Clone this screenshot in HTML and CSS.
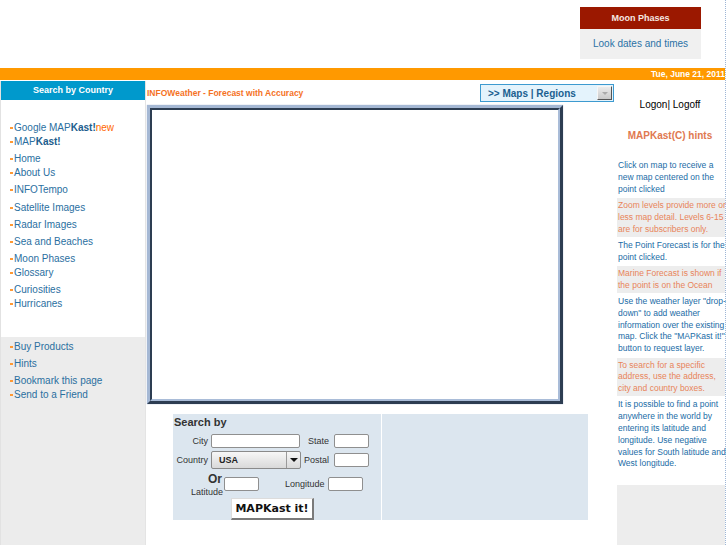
FILE: index.html
```html
<!DOCTYPE html>
<html>
<head>
<meta charset="utf-8">
<title>INFOWeather - MAPKast</title>
<link rel="stylesheet" href="styles.css">
</head>
<body>
<div class="page">
  <header class="top">
    <div class="moon">
      <div class="moon-head">Moon Phases</div>
      <div class="moon-body"><a href="#">Look dates and times</a></div>
    </div>
  </header>
  <div class="datebar">Tue, June 21, 2011</div>
  <div class="main">
    <aside class="left">
      <div class="lhead">Search by Country</div>
      <ul class="nav">
        <li><a href="#">Google MAP<b>Kast!</b></a><span class="new">new</span></li>
        <li><a href="#">MAP<b>Kast!</b></a></li>
        <li class="g3"><a href="#">Home</a></li>
        <li><a href="#">About Us</a></li>
        <li class="g3"><a href="#">INFOTempo</a></li>
        <li class="g4"><a href="#">Satellite Images</a></li>
        <li class="g3"><a href="#">Radar Images</a></li>
        <li class="g3"><a href="#">Sea and Beaches</a></li>
        <li class="g3"><a href="#">Moon Phases</a></li>
        <li><a href="#">Glossary</a></li>
        <li class="g3"><a href="#">Curiosities</a></li>
        <li><a href="#">Hurricanes</a></li>
      </ul>
      <ul class="nav nav2">
        <li><a href="#">Buy Products</a></li>
        <li class="g3"><a href="#">Hints</a></li>
        <li class="g3"><a href="#">Bookmark this page</a></li>
        <li><a href="#">Send to a Friend</a></li>
      </ul>
    </aside>
    <section class="center">
      <div class="titlerow">
        <span class="title">INFOWeather - Forecast with Accuracy</span>
        <div class="maps"><span class="maps-text">&gt;&gt; Maps | Regions</span><span class="mapbtn"><span class="tri-gray"></span></span></div>
      </div>
      <div class="mapframe"><div class="mapinner"></div></div>
      <div class="searchbox">
        <form class="sform">
          <div class="sb-title">Search by</div>
          <div class="frow r1">
            <span class="lbl">City</span>
            <input class="inp w89" type="text">
            <span class="lbl2 state">State</span>
            <input class="inp w35" type="text">
          </div>
          <div class="frow r2">
            <span class="lbl">Country</span>
            <div class="sel"><span class="selv">USA</span><span class="arr"><span class="tri"></span></span></div>
            <span class="lbl2 postal">Postal</span>
            <input class="inp w35" type="text">
          </div>
          <div class="frow r3">
            <div class="orlat"><div class="or">Or</div><div class="lat">Latitude</div></div>
            <input class="inp w35 mt4" type="text">
            <span class="lon">Longitude</span>
            <input class="inp w35 mt4" type="text">
          </div>
          <div class="frow r4">
            <button class="go" type="button">MAPKast it!</button>
          </div>
        </form>
        <div class="sright"></div>
      </div>
    </section>
    <aside class="right">
      <div class="logon">Logon| Logoff</div>
      <div class="hhead">MAPKast(C) hints</div>
      <div class="hints">
        <p class="hint blue">Click on map to receive a<br>new map centered on the<br>point clicked</p>
        <p class="hint org">Zoom levels provide more or<br>less map detail. Levels 6-15<br>are for subscribers only.</p>
        <p class="hint blue">The Point Forecast is for the<br>point clicked.</p>
        <p class="hint org">Marine Forecast is shown if<br>the point is on the Ocean</p>
        <p class="hint blue">Use the weather layer "drop-<br>down" to add weather<br>information over the existing<br>map. Click the "MAPKast it!"<br>button to request layer.</p>
        <p class="hint org">To search for a specific<br>address, use the address,<br>city and country boxes.</p>
        <p class="hint blue">It is possible to find a point<br>anywhere in the world by<br>entering its latitude and<br>longitude. Use negative<br>values for South latitude and<br>West longitude.</p>
      </div>
      <div class="hint-end"></div>
    </aside>
  </div>
</div>
</body>
</html>
```
FILE: styles.css
```css
* { box-sizing: border-box; }
html, body { margin: 0; padding: 0; }
body {
  background: #fff;
  font-family: "Liberation Sans", Arial, sans-serif;
  overflow: hidden;
}
a { text-decoration: none; color: inherit; }

.page {
  width: 726px;
  height: 545px;
  border-right: 1px dotted #9db6d6;
  display: flex;
  flex-direction: column;
}

/* header */
.top {
  height: 68px;
  display: flex;
  justify-content: flex-end;
  padding: 7px 24px 0 0;
}
.moon { width: 121px; }
.moon-head {
  height: 22px;
  background: #9b1800;
  color: #f5e8e2;
  font-weight: bold;
  font-size: 9px;
  line-height: 22px;
  text-align: center;
}
.moon-body {
  height: 30px;
  background: #f0f0f0;
  color: #2b72a6;
  font-size: 10px;
  line-height: 30px;
  text-align: center;
}

.datebar {
  height: 12px;
  background: #ff9900;
  color: #fff;
  font-weight: bold;
  font-size: 8.5px;
  line-height: 12px;
  text-align: right;
}

.main {
  flex: 1;
  display: flex;
  margin-top: 1px;
  min-height: 0;
}

/* left column */
.left {
  width: 146px;
  display: flex;
  flex-direction: column;
  border-left: 1px solid #e2e2e2;
  border-right: 1px solid #e4e4e4;
}
.lhead {
  height: 19px;
  background: #0099cc;
  color: #fff;
  font-weight: bold;
  font-size: 9px;
  line-height: 19px;
  text-align: center;
}
.nav {
  list-style: none;
  margin: 0;
  padding: 21px 0 0 9px;
  height: 237px;
  font-size: 10px;
  line-height: 14px;
  color: #2a6f9f;
}
.nav li { white-space: nowrap; }
.nav li::before {
  content: "";
  display: inline-block;
  width: 3px;
  height: 2px;
  background: #ff9933;
  margin-right: 1px;
  vertical-align: middle;
}
.nav li.g3 { margin-top: 3px; }
.nav li.g4 { margin-top: 4px; }
.nav b { color: #1c5d8d; }
.nav .new { color: #ff6600; }
.nav2 {
  flex: 1;
  height: auto;
  background: #ececec;
  padding-top: 3px;
}

/* center column */
.center {
  width: 469px;
  display: flex;
  flex-direction: column;
}
.titlerow {
  height: 24px;
  display: flex;
  justify-content: space-between;
  align-items: flex-start;
  padding: 3px 1px 0 1px;
}
.title {
  color: #f5721f;
  font-weight: bold;
  font-size: 8.5px;
  line-height: 18px;
}
.maps {
  width: 134px;
  height: 18px;
  border: 1px solid #3d9ad0;
  background: #e4f3fc;
  display: flex;
  align-items: center;
  padding-left: 7px;
}
.maps-text {
  flex: 1;
  color: #1b5f90;
  font-weight: bold;
  font-size: 10px;
}
.mapbtn {
  width: 15px;
  height: 14px;
  margin-right: 1px;
  background: linear-gradient(#ececec, #c9c9c9);
  border: 1px solid;
  border-color: #f6f6f6 #555 #555 #f6f6f6;
  display: flex;
  align-items: center;
  justify-content: center;
}
.tri-gray {
  width: 0;
  height: 0;
  border-left: 3px solid transparent;
  border-right: 3px solid transparent;
  border-top: 3px solid #aaa;
}

.mapframe {
  margin-left: 1px;
  width: 416px;
  height: 299px;
  border: 3px solid;
  border-color: #a5b8d4 #2d3d52 #2d3d52 #a5b8d4;
  box-shadow: 0 0 1px #9fb2cc;
}
.mapinner {
  height: 100%;
  border: 2px solid;
  border-color: #2d3d52 #a9bcd8 #a9bcd8 #2d3d52;
  background: #fff;
}

.searchbox {
  margin: 10px 0 0 27px;
  width: 415px;
  height: 106px;
  display: flex;
  background: #dce6ef;
}
.sform {
  width: 209px;
  margin: 0;
  border-right: 1px solid #fff;
  padding-top: 1px;
  font-size: 9px;
  color: #333;
}
.sright { flex: 1; }
.sb-title {
  font-size: 11px;
  font-weight: bold;
  line-height: 14px;
  padding-left: 1px;
  color: #333;
}
.frow { display: flex; align-items: center; }
.r1 { margin-top: 5px; height: 14px; }
.r2 { margin-top: 3px; height: 18px; }
.r3 { margin-top: 4px; height: 25px; align-items: flex-start; }
.r4 { height: 22px; }

.lbl { width: 35px; text-align: right; margin-right: 3px; }
.lbl2 { text-align: left; }
.state { width: 22px; margin: 0 4px 0 8px; }
.postal { width: 27px; margin: 0 3px 0 3px; }

.inp {
  height: 14px;
  border: 1px solid #8f8f8f;
  border-radius: 2px;
  background: #fff;
  padding: 0;
  margin: 0;
  font-size: 9px;
}
.w89 { width: 89px; }
.w35 { width: 35px; }
.mt4 { margin-top: 4px; }

.sel {
  width: 90px;
  height: 18px;
  border: 1px solid #8a8a8a;
  border-radius: 2px;
  background: linear-gradient(#f7f7f7, #d9d9d9);
  display: flex;
  align-items: center;
}
.selv {
  flex: 1;
  padding-left: 7px;
  font-weight: bold;
  font-size: 9px;
  color: #222;
}
.arr {
  width: 14px;
  height: 16px;
  border-left: 1px solid #9a9a9a;
  display: flex;
  align-items: center;
  justify-content: center;
}
.tri {
  width: 0;
  height: 0;
  border-left: 4px solid transparent;
  border-right: 4px solid transparent;
  border-top: 4px solid #111;
}

.orlat { width: 50px; text-align: right; margin-right: 1px; }
.or { font-weight: bold; font-size: 12px; line-height: 12px; padding-right: 1px; color: #333; }
.lat { line-height: 12px; margin-top: 1px; }
.lon { width: 42px; margin: 4px 1px 0 26px; line-height: 14px; }

.go {
  margin-left: 58px;
  width: 83px;
  height: 22px;
  padding: 0;
  font-family: "DejaVu Sans", sans-serif;
  font-weight: bold;
  font-size: 11px;
  color: #111;
  background: #fff;
  border-style: solid;
  border-width: 1px 2px 2px 1px;
  border-color: #dcdcdc #7a7a7a #7a7a7a #dcdcdc;
}

/* right column */
.right {
  width: 110px;
  display: flex;
  flex-direction: column;
}
.logon {
  padding-top: 17px;
  font-size: 10px;
  line-height: 14px;
  text-align: center;
  color: #000;
}
.hhead {
  margin-top: 17px;
  font-size: 10px;
  line-height: 14px;
  font-weight: bold;
  text-align: center;
  color: #e07850;
}
.hints { margin-top: 15.6px; }
.hint {
  margin: 0 0 1.5px 2px;
  padding: 1.5px 0 1.5px 1px;
  font-size: 8.5px;
  line-height: 11.8px;
  white-space: nowrap;
}
.hint.blue { color: #1a6ca6; background: #fff; }
.hint.org { color: #e8845a; background: #ededed; }
.hint-end {
  flex: 1;
  margin: 12px 0 0 2px;
  background: #ededed;
}
```
